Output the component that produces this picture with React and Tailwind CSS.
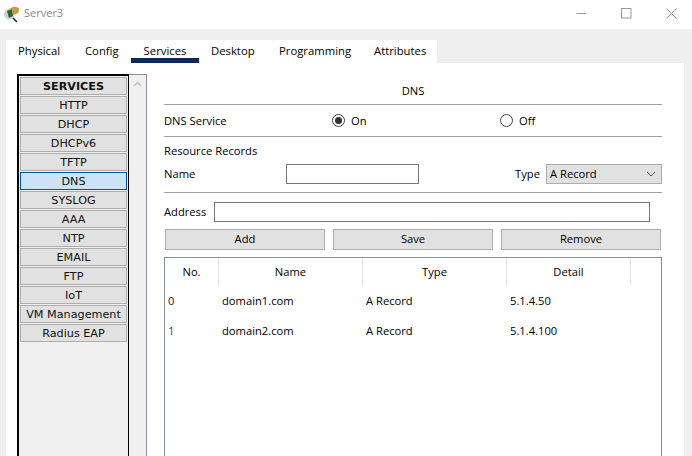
const services = ["HTTP","DHCP","DHCPv6","TFTP","DNS","SYSLOG","AAA","NTP","EMAIL","FTP","IoT","VM Management","Radius EAP"];
const ui = { fontFamily: '"Open Sans", "Noto Sans", sans-serif' };
const side = { fontFamily: '"DejaVu Sans", sans-serif' };

function Radio({ on, label, className }) {
  return (
    <div className={"flex items-center gap-[6px] " + className}>
      <span className="w-[13px] h-[13px] rounded-full border border-[#444] flex items-center justify-center bg-white">
        {on && <span className="w-[7px] h-[7px] rounded-full bg-[#333]" />}
      </span>
      <span>{label}</span>
    </div>
  );
}

function Btn({ children }) {
  return <div className="w-[160px] h-[21px] bg-[#e1e1e1] border border-[#adadad] flex items-center justify-center">{children}</div>;
}

export default function App() {
  return (
    <div className="w-[692px] h-[456px] overflow-hidden bg-[#efefef] flex flex-col text-[11.2px] text-black" style={ui}>
      <div className="h-[29px] shrink-0 bg-white flex items-center relative">
        <svg className="ml-[3px] mt-[-1px]" width="17" height="17" viewBox="0 0 17 17">
          <circle cx="6.5" cy="8" r="5.5" fill="#d0d0d0" />
          <path d="M4 5 L9 3 L10 10 L6 12 Z" fill="#1f6b2a" />
          <path d="M6 3 L11 0.5 L16 2 L15.5 7 L10 9 L9 3.5 Z" fill="#c79a45" />
          <path d="M10 12 L14 16" stroke="#222" strokeWidth="1.6" />
        </svg>
        <span className="ml-[4px] mt-[-2px] text-[11px] text-[#8a8a8a]">Server3</span>
        <div className="ml-auto mr-[15px] flex items-center gap-[34px] mt-[-3px]">
          <svg width="11" height="11" viewBox="0 0 11 11"><path d="M0.5 5.5H10.5" stroke="#999" strokeWidth="1" /></svg>
          <svg width="11" height="11" viewBox="0 0 11 11"><rect x="0.5" y="0.5" width="9.5" height="9.5" fill="none" stroke="#999" /></svg>
          <svg width="11" height="11" viewBox="0 0 11 11"><path d="M0.5 0.5L10.5 10.5M10.5 0.5L0.5 10.5" stroke="#999" strokeWidth="1" /></svg>
        </div>
      </div>

      <div className="mt-[11px] ml-[6px] w-[431px] h-[23px] bg-white flex shrink-0 text-[11.3px]">
        <div className="w-[67px] pl-[12px] pt-[3px]">Physical</div>
        <div className="w-[58px] pl-[12px] pt-[3px]">Config</div>
        <div className="w-[68px] text-center pt-[3px] border-b-[5px] border-[#0f2a52]">Services</div>
        <div className="w-[68px] pl-[12px] pt-[3px]">Desktop</div>
        <div className="w-[95px] pl-[12px] pt-[3px] whitespace-nowrap">Programming</div>
        <div className="pl-[12px] pt-[3px]">Attributes</div>
      </div>

      <div className="ml-[6px] mr-[8px] flex-1 bg-white flex pl-[11px] pt-[11px] min-h-0">
        <div className="w-[112px] h-[400px] shrink-0 border-t-2 border-l-2 border-r border-black bg-[#f0f0f0] flex flex-col gap-[1px] pl-px pt-px text-[11.2px] text-[#111]" style={side}>
          <div className="w-[107px] h-[18px] pt-[2px] shrink-0 bg-[#e1e1e1] border border-[#adadad] flex items-center justify-center font-bold">SERVICES</div>
          {services.map((s) => (
            <div key={s} className={"w-[107px] h-[18px] pt-[2px] shrink-0 border flex items-center justify-center " + (s === "DNS" ? "bg-[#cce4f7] border-[#005499]" : "bg-[#e1e1e1] border-[#adadad]")}>{s}</div>
          ))}
        </div>
        <div className="w-[18px] h-[400px] shrink-0 bg-[#f0f0f0] border-r border-t border-[#8a8f96] flex justify-center pt-[6px]">
          <svg width="9" height="6" viewBox="0 0 9 6"><path d="M1 5L4.5 1.5L8 5" fill="none" stroke="#c4c4c4" strokeWidth="1.6" /></svg>
        </div>

        <div className="ml-[17px] w-[498px] shrink-0 flex flex-col">
          <div className="h-[31px] text-center pt-[9px] border-b border-[#a0a0a0] shrink-0">DNS</div>
          <div className="h-[32px] pt-px flex items-center border-b border-[#a0a0a0] shrink-0">
            <span className="w-[168px]">DNS Service</span>
            <Radio on label="On" className="w-[168px]" />
            <Radio label="Off" />
          </div>
          <div className="h-[27px] flex items-center shrink-0 pt-[2px]">Resource Records</div>
          <div className="h-[29px] flex items-start border-b border-[#a0a0a0] shrink-0">
            <span className="w-[122px] mt-[2px]">Name</span>
            <div className="w-[133px] h-[20px] border border-[#767676] bg-white" />
            <span className="ml-auto mr-[6px] mt-[2px]">Type</span>
            <div className="w-[116px] h-[20px] bg-[#e1e1e1] border border-[#adadad] flex items-center pl-[3px] pr-[5px] justify-between">
              <span>A Record</span>
              <svg width="10" height="6" viewBox="0 0 10 6"><path d="M1 1L5 5L9 1" fill="none" stroke="#555" strokeWidth="1" /></svg>
            </div>
          </div>
          <div className="flex items-center shrink-0 mt-[9px]">
            <span className="w-[50px]">Address</span>
            <div className="w-[436px] h-[20px] border border-[#767676] bg-white" />
          </div>
          <div className="flex gap-[8px] ml-px mt-[7px] shrink-0">
            <Btn>Add</Btn>
            <Btn>Save</Btn>
            <Btn>Remove</Btn>
          </div>
          <div className="mt-[7px] h-[220px] border border-[#8a8f96] shrink-0 bg-white">
            <div className="flex h-[28px] text-center items-center">
              <div className="w-[54px] h-full flex items-center justify-center border-r border-[#e5e5e5]">No.</div>
              <div className="w-[144px] h-full flex items-center justify-center border-r border-[#e5e5e5]">Name</div>
              <div className="w-[144px] h-full flex items-center justify-center border-r border-[#e5e5e5]">Type</div>
              <div className="w-[124px] h-full flex items-center justify-center border-r border-[#e5e5e5]">Detail</div>
            </div>
            <div className="grid grid-cols-[53px_144px_144px_1fr] auto-rows-[30px] items-center">
              <div className="pl-[3px] text-[#222]">0</div><div className="pl-[4px]">domain1.com</div><div className="pl-[4px]">A Record</div><div className="pl-[4px]">5.1.4.50</div>
              <div className="pl-[3px] text-[#14507a]">1</div><div className="pl-[4px]">domain2.com</div><div className="pl-[4px]">A Record</div><div className="pl-[4px]">5.1.4.100</div>
            </div>
          </div>
        </div>
      </div>
    </div>
  );
}
